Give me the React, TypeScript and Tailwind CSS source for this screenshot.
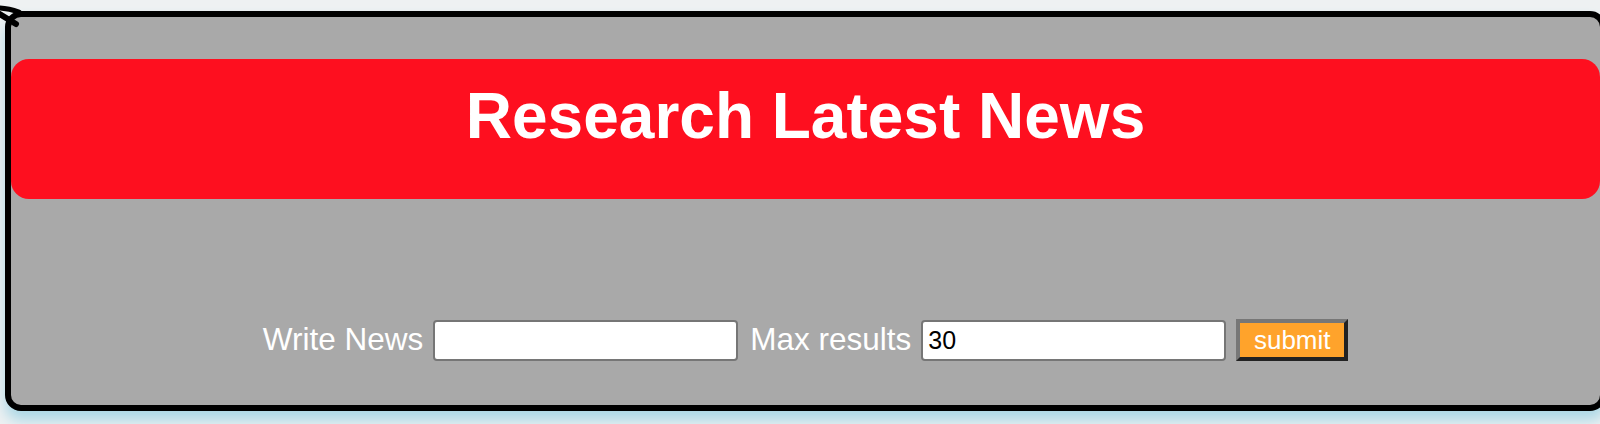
export default function App() {
  return (
    <div className="relative w-[1600px] h-[424px] overflow-hidden bg-[#eef1f2] pt-[11px] pl-[5px] font-['Liberation_Sans',Arial,sans-serif]">
      <div className="w-[1601px] h-[400px] border-[6px] border-black rounded-[16px] bg-[#a9a9a9] shadow-[0_10px_14px_#add8e6] flex flex-col">
        <div className="mt-[42px] h-[140px] rounded-[18px] bg-[#fe0f1f] pt-[25px]">
          <h1 className="text-center text-white font-bold text-[64px] leading-[64px]">Research Latest News</h1>
        </div>
        <form className="mt-[120px] flex items-center justify-center gap-[10px]" onSubmit={(e) => e.preventDefault()}>
          <label className="text-white text-[31.5px] leading-none">Write News</label>
          <input
            type="text"
            className="w-[305px] h-[41px] border-2 border-[#767676] rounded-[4px] bg-white text-[25px] px-[5px] text-black outline-none"
          />
          <label className="text-white text-[31.5px] leading-none ml-[2px]">Max results</label>
          <input
            type="text"
            defaultValue="30"
            className="w-[305px] h-[41px] border-2 border-[#767676] rounded-[4px] bg-white text-[25px] px-[5px] text-black outline-none"
          />
          <button
            type="submit"
            className="w-[112px] h-[42px] bg-[#ffa32b] text-white text-[26px] leading-none border-4 border-t-[#777777] border-l-[#777777] border-b-[#222222] border-r-[#222222]"
          >
            submit
          </button>
        </form>
      </div>
      <svg className="absolute left-0 top-0" width="30" height="30" viewBox="0 0 30 30">
        <path d="M-2 8 Q 8 8 19 12" fill="none" stroke="black" strokeWidth="5" strokeLinecap="round" />
        <path d="M-2 13 L 16 24" fill="none" stroke="black" strokeWidth="6" strokeLinecap="round" />
      </svg>
    </div>
  );
}
